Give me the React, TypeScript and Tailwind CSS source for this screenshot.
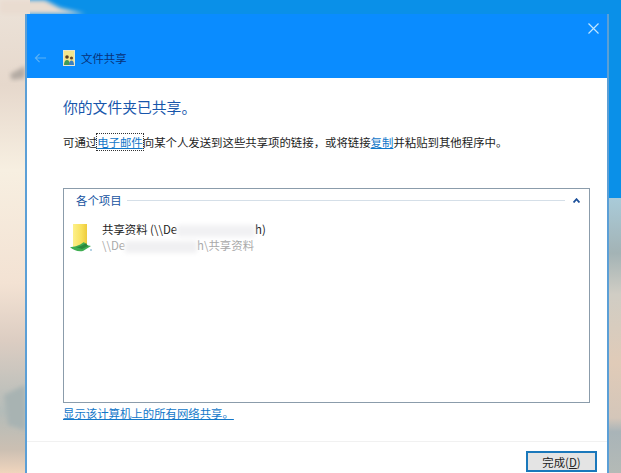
const cjk = "font-['Noto_Sans_CJK_SC','Liberation_Sans',sans-serif]"

function Wallpaper() {
  return (
    <svg className="absolute inset-0 h-full w-full" viewBox="0 0 621 473" preserveAspectRatio="none">
      <defs>
        <filter id="soft" x="-20%" y="-20%" width="140%" height="140%">
          <feGaussianBlur stdDeviation="2" />
        </filter>
        <linearGradient id="sand" x1="0" y1="0" x2="0" y2="1">
          <stop offset="0" stopColor="#ece3d9" />
          <stop offset="0.18" stopColor="#e6d8cc" />
          <stop offset="0.36" stopColor="#f7efe1" />
          <stop offset="0.6" stopColor="#f3e2d3" />
          <stop offset="0.72" stopColor="#dccdc2" />
          <stop offset="0.87" stopColor="#b4bcb9" />
          <stop offset="0.95" stopColor="#cbbfb2" />
          <stop offset="1" stopColor="#f0d5bd" />
        </linearGradient>
        <linearGradient id="sandRight" x1="0" y1="0" x2="0" y2="1">
          <stop offset="0" stopColor="#a9cbd9" />
          <stop offset="0.2" stopColor="#a3b3b5" />
          <stop offset="0.35" stopColor="#d0cdc4" />
          <stop offset="0.6" stopColor="#e0cbb8" />
          <stop offset="0.8" stopColor="#d4c6b9" />
          <stop offset="0.85" stopColor="#a9b4b8" />
          <stop offset="1" stopColor="#b4bab6" />
        </linearGradient>
      </defs>
      <rect width="621" height="473" fill="#0a90e8" />
      <rect x="0" y="0" width="30" height="473" fill="url(#sand)" />
      <path d="M0 0H45L60 8L85 14H0Z" fill="#e9dcd0" filter="url(#soft)" />
      <rect x="606" y="198" width="15" height="275" fill="url(#sandRight)" />
      <path d="M10 74L25 66V78L12 80Z" fill="#b3aaa3" filter="url(#soft)" />
      <path d="M4 395L25 385V430L8 425Z" fill="#a8b3b2" filter="url(#soft)" />
    </svg>
  )
}

function SharingIcon() {
  return (
    <svg width="12" height="16" viewBox="0 0 12 16">
      <rect x="0.5" y="0.5" width="11" height="15" fill="#f4e58c" stroke="#e8e6d0" />
      <circle cx="4" cy="7" r="1.800" fill="#5a3f26" />
      <path d="M1 15c0-3 1.200-5 3-5s3 2 3 5z" fill="#3f9a5a" />
      <circle cx="8.500" cy="8" r="1.600" fill="#6b4a2b" />
      <path d="M6 15c0-2.700 1-4.500 2.500-4.500s2.500 1.800 2.500 4.500z" fill="#3c7fc0" />
    </svg>
  )
}

function FolderIcon() {
  return (
    <svg width="24" height="30" viewBox="0 0 24 30">
      <defs>
        <linearGradient id="folder" x1="0" y1="0" x2="1" y2="0">
          <stop offset="0" stopColor="#fdf08a" />
          <stop offset="0.6" stopColor="#f8e15c" />
          <stop offset="1" stopColor="#eecb3c" />
        </linearGradient>
      </defs>
      <path d="M4 1H18V21L12 24H4Z" fill="url(#folder)" />
      <path d="M1 24C5 24 10 23 15 19L17 22L22 23L14 28C9 29 4 27 1 24Z" fill="#3fae52" />
      <path d="M7 24C11 24 14 22 17 20L19 23L13 26Z" fill="#2b8a3c" />
      <circle cx="22" cy="27" r="1" fill="#9cc4dc" />
    </svg>
  )
}

// the smudged out part of the path in the screenshot
function Smudge({ className }: { className: string }) {
  return <span className={`inline-block h-[12px] align-middle blur-[2px] ${className}`} />
}

export default function App() {
  return (
    <div className={`relative h-[473px] w-[621px] overflow-hidden ${cjk}`}>
      <Wallpaper />

      <div className="absolute left-[25px] top-[14px] flex h-[459px] w-[584px] flex-col border-x-2 border-[#5b9fd6] bg-white">
        <div className="relative flex h-[64px] items-end bg-[#0a8cff] pb-[12px] pl-[7px]">
          <svg className="mb-[2px]" width="13" height="12" viewBox="0 0 14 12" fill="none" stroke="#5cb2f5" strokeWidth="1.200">
            <path d="M13 6H1.500M6 1.500L1.500 6L6 10.500" />
          </svg>
          <span className="ml-[16px]">
            <SharingIcon />
          </span>
          <span className="ml-[6px] text-[11.4px] leading-[16px] text-[#08327a]">文件共享</span>
          <svg className="absolute right-[8px] top-[9px]" width="11" height="11" viewBox="0 0 11 11" stroke="#bfe6ff" strokeWidth="1.200">
            <path d="M0.500 0.500L10.500 10.500M10.500 0.500L0.500 10.500" />
          </svg>
        </div>

        <div className="flex flex-1 flex-col px-[36px]">
          <h1 className="mt-[17px] text-[14.8px] font-normal leading-[24px] text-[#1756ab]">你的文件夹已共享。</h1>
          <p className="mt-[13px] whitespace-nowrap text-[11.4px] leading-[20px] text-[#1c1c1c]">
            可通过
            <a className="text-[#1277c9] underline outline-1 outline-dotted outline-[#333]">电子邮件</a>
            向某个人发送到这些共享项的链接，或将链接
            <a className="text-[#1277c9] underline">复制</a>
            并粘贴到其他程序中。
          </p>

          <div className="mt-[36px] flex h-[215px] w-[527px] flex-col border border-[#8b9cab] px-[12px]">
            <div className="mt-[3px] flex items-center">
              <span className="text-[11.4px] leading-[16px] text-[#16539f]">各个项目</span>
              <div className="ml-[5px] h-px flex-1 bg-[#d5dfe8]" />
              <svg className="ml-[8px] mr-[-3px]" width="7" height="5" viewBox="0 0 7 5" fill="none" stroke="#1b4f9a" strokeWidth="1.800">
                <path d="M0.500 4.500L3.500 1.200L6.500 4.500" />
              </svg>
            </div>
            <div className="ml-[-7px] mt-[13px] flex items-start">
              <span className="mt-[2px]">
                <FolderIcon />
              </span>
              <div className="ml-[9px] text-[11.4px] leading-[16px]">
                <div className="whitespace-nowrap text-[#222]">
                  共享资料 (\\De
                  <Smudge className="w-[78px] bg-[#f1f1f3]" />
                  h)
                </div>
                <div className="whitespace-nowrap text-[#a9a9a9]">
                  \\De
                  <Smudge className="w-[72px] bg-[#f0f0f2]" />
                  h\共享资料
                </div>
              </div>
            </div>
          </div>

          <a className="mt-[2px] text-[11.4px] leading-[16px] text-[#1277c9] underline">显示该计算机上的所有网络共享。</a>

          <div className="mx-[-36px] mt-[20px] h-px bg-[#f1f1f1]" />
          <div className="flex justify-end">
            <button className="mr-[-26px] mt-[9px] h-[21px] w-[71px] border-2 border-[#1a78bb] bg-[#e4e4e4] text-[11.4px] leading-[16px] text-[#222]">
              完成(<span className="underline">D</span>)
            </button>
          </div>
        </div>
      </div>
    </div>
  )
}
